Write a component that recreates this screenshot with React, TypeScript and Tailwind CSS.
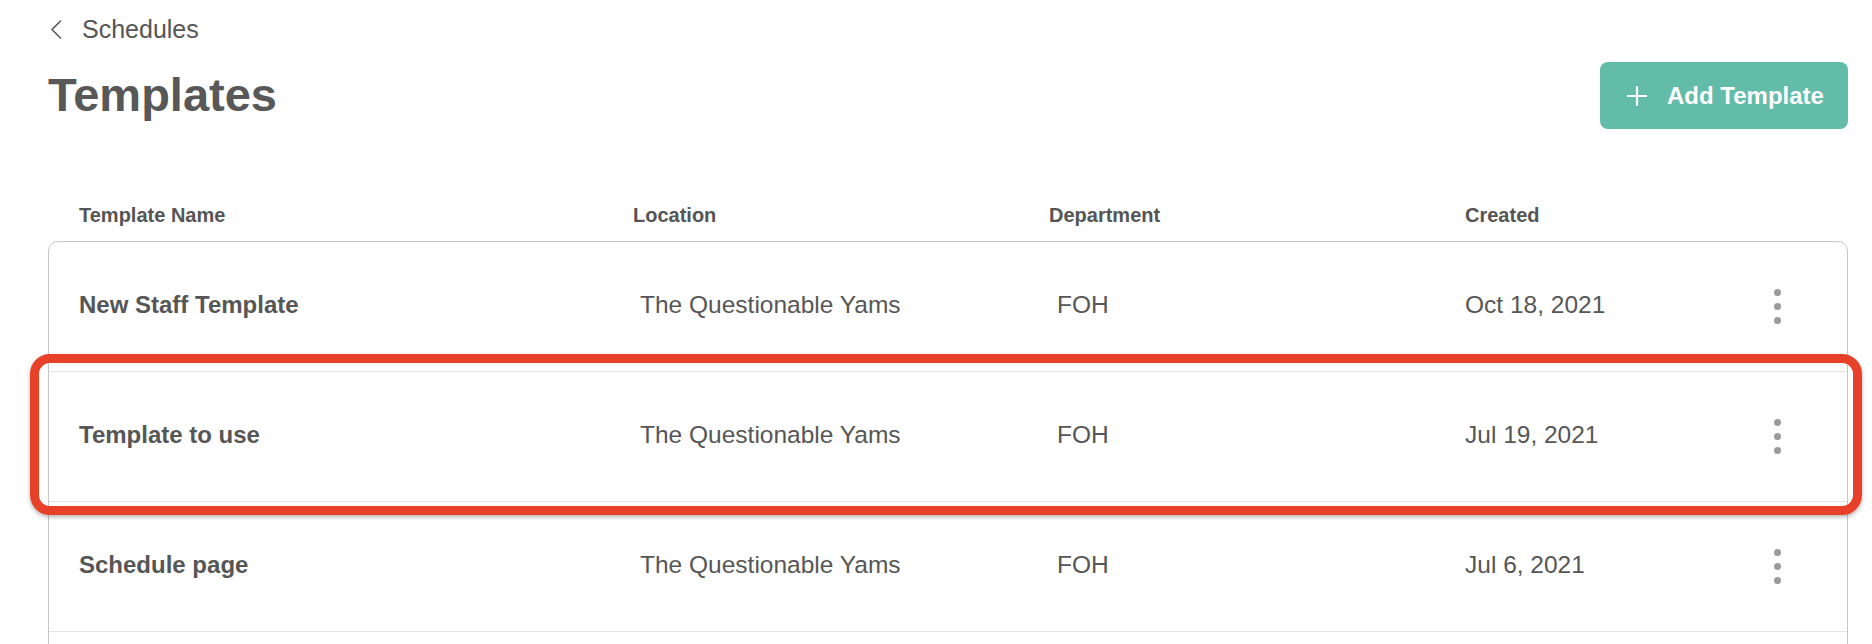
import { MoreVertical } from "lucide-react";

type Template = {
  name: string;
  location: string;
  department: string;
  created: string;
  highlighted?: boolean;
};

const templates: Template[] = [
  { name: "New Staff Template", location: "The Questionable Yams", department: "FOH", created: "Oct 18, 2021" },
  { name: "Template to use", location: "The Questionable Yams", department: "FOH", created: "Jul 19, 2021", highlighted: true },
  { name: "Schedule page", location: "The Questionable Yams", department: "FOH", created: "Jul 6, 2021" },
];

function Dots() {
  return (
    <div className="flex flex-col gap-[7px]">
      <span className="w-[7px] h-[7px] rounded-full bg-[#9b9b9b]" />
      <span className="w-[7px] h-[7px] rounded-full bg-[#9b9b9b]" />
      <span className="w-[7px] h-[7px] rounded-full bg-[#9b9b9b]" />
    </div>
  );
}

function TemplateRow({ t }: { t: Template }) {
  return (
    <div className="relative h-[130px] flex items-center pl-[30px] border-b border-[#e3e3e3] text-[24.5px] text-[#565656]">
      <div className="w-[561px] font-bold text-[24px] -mt-[3px]">{t.name}</div>
      <div className="w-[417px] -mt-[3px]">{t.location}</div>
      <div className="w-[408px] -mt-[3px]">{t.department}</div>
      <div className="w-[309px] -mt-[3px]">{t.created}</div>
      <Dots />

      {/* annotation around the selected row */}
      {t.highlighted && (
        <div className="absolute -left-[19px] -right-[15px] -top-[18px] -bottom-[14px] rounded-[20px] border-[9px] border-[#e8412a] shadow-[0_2px_4px_rgba(0,0,0,0.3)] pointer-events-none" />
      )}
    </div>
  );
}

export default function App() {
  return (
    <div
      className="min-h-screen bg-white pl-[48px] pr-[24px] text-[#565656]"
      style={{ fontFamily: '"Liberation Sans", Arial, sans-serif' }}
    >
      {/* Page header */}
      <div className="flex justify-between items-start">
        <div>
          <div className="mt-[14px] h-[30px] flex items-center gap-[20px] pl-[2px]">
            <svg width="12" height="19" viewBox="0 0 12 19" fill="none">
              <polyline points="10.5,1 2,9.5 10.5,18" stroke="#5a5a5a" strokeWidth="1.6" strokeLinecap="round" strokeLinejoin="round" />
            </svg>
            <span className="text-[25px] leading-[30px]">Schedules</span>
          </div>
          <h1 className="mt-[28px] text-[47px] leading-[46px] font-bold text-[#585858]">Templates</h1>
        </div>

        <button className="mt-[62px] w-[248px] h-[67px] rounded-[8px] bg-[#63bba9] text-white flex items-center pl-[26px] gap-[19px]">
          <svg width="22" height="22" viewBox="0 0 22 22" fill="none">
            <path d="M11 1v20M1 11h20" stroke="white" strokeWidth="2.2" />
          </svg>
          <span className="text-[24px] font-bold">Add Template</span>
        </button>
      </div>

      {/* Column headers */}
      <div className="mt-[76px] h-[20px] flex items-center pl-[31px] text-[20px] leading-[20px] font-bold text-[#555]">
        <div className="w-[554px]">Template Name</div>
        <div className="w-[416px]">Location</div>
        <div className="w-[416px]">Department</div>
        <div>Created</div>
      </div>

      {/* Template list */}
      <div className="mt-[16px] border border-[#c6c6c6] rounded-[10px] bg-white">
        {templates.map((t) => (
          <TemplateRow key={t.name} t={t} />
        ))}
        <div className="h-[130px]" />
      </div>
    </div>
  );
}
